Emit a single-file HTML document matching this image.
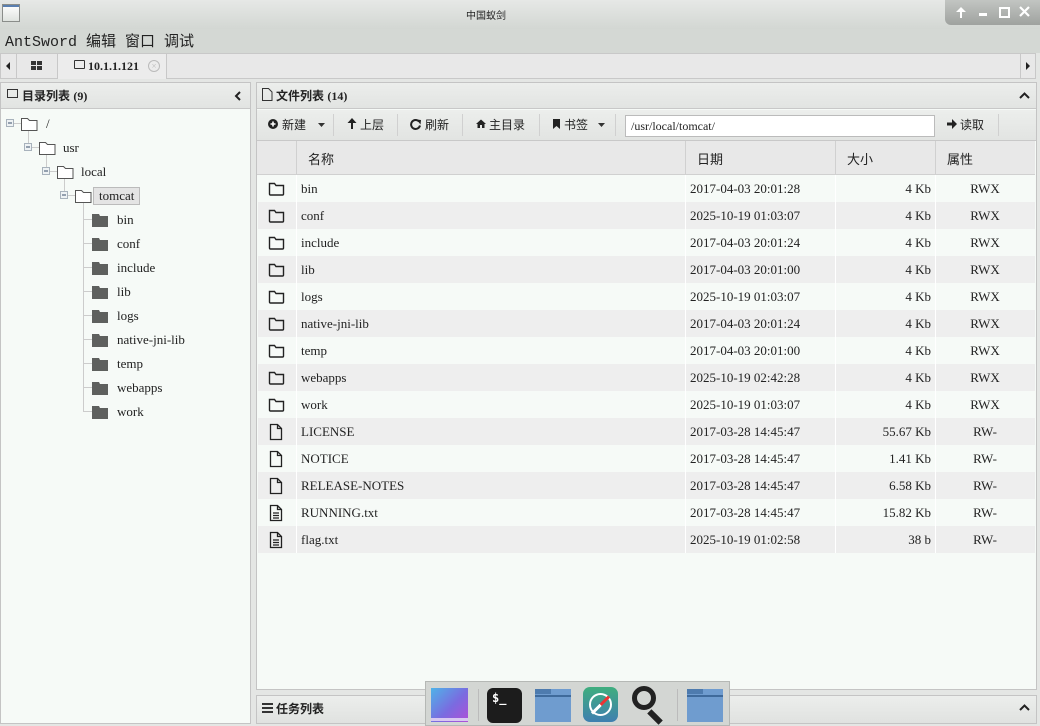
<!DOCTYPE html>
<html><head><meta charset="utf-8"><style>
*{margin:0;padding:0;box-sizing:border-box}
body{width:1040px;height:726px;overflow:hidden;background:#e4e6e4;font-family:"Liberation Serif","Noto Sans CJK SC",serif;font-size:13px;color:#222;position:relative}
.a{position:absolute}
.cjk{font-family:"Liberation Sans","Noto Sans CJK SC",sans-serif}
.row{position:absolute;left:258px;width:777px;height:27px}
.row span{position:absolute;top:6px;white-space:nowrap}
.tn{position:absolute;white-space:nowrap}
</style></head><body>
<!-- title bar -->
<div class="a" style="left:0;top:0;width:1040px;height:29px;background:linear-gradient(#e6e8e6,#d3d7d3)"></div>
<div class="a" style="left:2px;top:4px;width:18px;height:18px;border:1px solid #8a8d8a;background:linear-gradient(#fff,#dfe3df)"><div style="height:2px;background:#5a7fb0"></div></div>
<div class="a cjk" style="left:466px;top:7px;font-size:10px;color:#222">中国蚁剑</div>
<div class="a" style="left:945px;top:0;width:95px;height:25px;background:linear-gradient(#c2c5c2,#9fa29f);border-radius:0 0 0 6px"></div>
<svg class="a" style="left:945px;top:0" width="95" height="25">
<path d="M15 18v-6h-4l5-5 5 5h-4v6z" fill="#fff"/>
<rect x="34" y="13" width="8" height="3" fill="#fff"/>
<rect x="55" y="8" width="9" height="9" fill="none" stroke="#fff" stroke-width="2"/>
<path d="M75 7l9 9M84 7l-9 9" stroke="#fff" stroke-width="2.2"/>
</svg>
<!-- menu -->
<div class="a" style="left:0;top:29px;width:1040px;height:24px;background:#d4d8d4"></div>
<div class="a" style="left:5px;top:30px;font:15px 'Liberation Mono','Noto Sans CJK SC',monospace;color:#222">AntSword 编辑 窗口 调试</div>
<!-- tab bar -->
<div class="a" style="left:0;top:53px;width:1036px;height:26px;background:#e8e8e8;border:1px solid #c8c8c8"></div>
<div class="a" style="left:16px;top:54px;width:1px;height:25px;background:#c8c8c8"></div>
<svg class="a" style="left:5px;top:62px" width="6" height="9"><path d="M5 0v8l-4-4z" fill="#222"/></svg>
<div class="a" style="left:31px;top:61px;width:5px;height:4px;background:#333;box-shadow:6px 0 #333,0 5px #333,6px 5px #333"></div>
<div class="a" style="left:57px;top:54px;width:110px;height:25px;background:#ececec;border-left:1px solid #c8c8c8;border-right:1px solid #c8c8c8"></div>
<div class="a" style="left:74px;top:60px;width:11px;height:9px;border:1px solid #333;border-radius:1px"></div>
<div class="a" style="left:88px;top:59px;font-weight:bold;font-size:12px">10.1.1.121</div>
<div class="a" style="left:148px;top:60px;width:12px;height:12px;border:1px solid #bbb;border-radius:50%;color:#bbb;font-size:9px;line-height:10px;text-align:center">×</div>
<div class="a" style="left:1020px;top:54px;width:16px;height:25px;border-left:1px solid #c8c8c8"></div>
<svg class="a" style="left:1025px;top:62px" width="6" height="9"><path d="M1 0v8l4-4z" fill="#222"/></svg>
<!-- left panel -->
<div class="a" style="left:0;top:82px;width:251px;height:642px;border:1px solid #c4c4c4;background:#f6faf7"></div>
<div class="a" style="left:1px;top:83px;width:249px;height:26px;background:linear-gradient(#eceeec,#e2e4e2);border-bottom:1px solid #c8c8c8"></div>
<div class="a" style="left:7px;top:89px;width:11px;height:9px;border:1px solid #333"></div>
<div class="a cjk" style="left:22px;top:87px;font-size:12px;font-weight:bold">目录列表 <span style="font-family:'Liberation Serif'">(9)</span></div>
<svg class="a" style="left:234px;top:91px" width="8" height="10"><path d="M6 1l-4 4 4 4" fill="none" stroke="#222" stroke-width="2"/></svg>
<!-- tree -->
<svg class="a" style="left:0;top:110px" width="250" height="320">
<g stroke="#ccc" fill="none">
<line x1="28.5" y1="18" x2="28.5" y2="37"/><line x1="46.5" y1="42" x2="46.5" y2="61"/><line x1="64.5" y1="66" x2="64.5" y2="85"/>
<line x1="83.5" y1="91" x2="83.5" y2="301"/>
<line x1="83" y1="109.5" x2="92" y2="109.5"/><line x1="83" y1="133.5" x2="92" y2="133.5"/><line x1="83" y1="157.5" x2="92" y2="157.5"/><line x1="83" y1="181.5" x2="92" y2="181.5"/><line x1="83" y1="205.5" x2="92" y2="205.5"/><line x1="83" y1="229.5" x2="92" y2="229.5"/><line x1="83" y1="253.5" x2="92" y2="253.5"/><line x1="83" y1="277.5" x2="92" y2="277.5"/><line x1="83" y1="301.5" x2="92" y2="301.5"/>
<line x1="14" y1="13.5" x2="21" y2="13.5"/><line x1="32" y1="37.5" x2="39" y2="37.5"/><line x1="50" y1="61.5" x2="57" y2="61.5"/><line x1="68" y1="85.5" x2="75" y2="85.5"/>
</g>
<g fill="#eef2f4" stroke="#a8b2bc">
<rect x="6.5" y="9.5" width="7" height="7"/><rect x="24.5" y="33.5" width="7" height="7"/><rect x="42.5" y="57.5" width="7" height="7"/><rect x="60.5" y="81.5" width="7" height="7"/>
</g>
<g stroke="#3b4e6a"><line x1="8" y1="13" x2="12" y2="13"/><line x1="26" y1="37" x2="30" y2="37"/><line x1="44" y1="61" x2="48" y2="61"/><line x1="62" y1="85" x2="66" y2="85"/></g>
<g fill="#fff" stroke="#555">
<path d="M21.5 20.5v-12h6l2 2h7.5v10z"/><path d="M39.5 44.5v-12h6l2 2h7.5v10z"/><path d="M57.5 68.5v-12h6l2 2h7.5v10z"/><path d="M75.5 92.5v-12h6l2 2h7.5v10z"/>
</g>
<g fill="#5e605e">
<path d="M92 104h7l1 2h8v11h-16z"/><path d="M92 128h7l1 2h8v11h-16z"/><path d="M92 152h7l1 2h8v11h-16z"/><path d="M92 176h7l1 2h8v11h-16z"/><path d="M92 200h7l1 2h8v11h-16z"/><path d="M92 224h7l1 2h8v11h-16z"/><path d="M92 248h7l1 2h8v11h-16z"/><path d="M92 272h7l1 2h8v11h-16z"/><path d="M92 296h7l1 2h8v11h-16z"/>
</g>
<rect x="93.5" y="77.5" width="46" height="17" fill="#e4e4e4" stroke="#bbb"/>
</svg>
<div class="tn" style="left:46px;top:116px">/</div>
<div class="tn" style="left:63px;top:140px">usr</div>
<div class="tn" style="left:81px;top:164px">local</div>
<div class="tn" style="left:99px;top:188px">tomcat</div>
<div class="tn" style="left:117px;top:212px">bin</div>
<div class="tn" style="left:117px;top:236px">conf</div>
<div class="tn" style="left:117px;top:260px">include</div>
<div class="tn" style="left:117px;top:284px">lib</div>
<div class="tn" style="left:117px;top:308px">logs</div>
<div class="tn" style="left:117px;top:332px">native-jni-lib</div>
<div class="tn" style="left:117px;top:356px">temp</div>
<div class="tn" style="left:117px;top:380px">webapps</div>
<div class="tn" style="left:117px;top:404px">work</div>
<!-- right panel -->
<div class="a" style="left:256px;top:82px;width:781px;height:608px;border:1px solid #c4c4c4;background:#f6faf7"></div>
<div class="a" style="left:257px;top:83px;width:779px;height:26px;background:linear-gradient(#eceeec,#e2e4e2);border-bottom:1px solid #c8c8c8"></div>
<svg class="a" style="left:262px;top:88px" width="11" height="13"><path d="M0.5 0.5h6l3.5 3.5v8.5h-9.5z" fill="none" stroke="#333"/></svg>
<div class="a cjk" style="left:276px;top:87px;font-size:12px;font-weight:bold">文件列表 <span style="font-family:'Liberation Serif'">(14)</span></div>
<svg class="a" style="left:1019px;top:92px" width="11" height="7"><path d="M1 6l4.5-4.5 4.5 4.5" fill="none" stroke="#222" stroke-width="2"/></svg>
<!-- toolbar -->
<div class="a" style="left:257px;top:110px;width:779px;height:31px;background:linear-gradient(#eceeec,#e2e4e2);border-bottom:1px solid #c8c8c8"></div>
<svg class="a" style="left:257px;top:110px" width="370" height="31">
<circle cx="16" cy="14" r="5" fill="#222"/><path d="M13.5 14h5M16 11.5v5" stroke="#fff" stroke-width="1.6"/>
<path d="M61 13l3.5 4 3.5-4z" fill="#333"/>
<path d="M94 19v-6h-3.5l4.5-5 4.5 5h-3.5v6z" fill="#222"/>
<path d="M162 11.5a4.5 4.5 0 1 0 1 4" fill="none" stroke="#222" stroke-width="2"/><path d="M159.5 9.5l4.5 0.5-0.5 4.5z" fill="#222"/>
<path d="M219 14l5-4.5 5 4.5h-1.5v4h-2.5v-3h-2v3h-2.5v-4z" fill="#222"/>
<path d="M296 9h7v10l-3.5-3-3.5 3z" fill="#222"/>
<path d="M341 13l3.5 4 3.5-4z" fill="#333"/>
</svg>
<svg class="a" style="left:946px;top:118px" width="12" height="12"><path d="M1 4.5h5v-3.5l5 5-5 5v-3.5h-5z" fill="#222"/></svg>
<div class="a cjk" style="left:282px;top:116px;font-size:12px">新建</div>
<div class="a" style="left:333px;top:114px;width:1px;height:22px;background:#d0d0d0"></div>
<div class="a cjk" style="left:360px;top:116px;font-size:12px">上层</div>
<div class="a" style="left:397px;top:114px;width:1px;height:22px;background:#d0d0d0"></div>
<div class="a cjk" style="left:425px;top:116px;font-size:12px">刷新</div>
<div class="a" style="left:462px;top:114px;width:1px;height:22px;background:#d0d0d0"></div>
<div class="a cjk" style="left:489px;top:116px;font-size:12px">主目录</div>
<div class="a" style="left:539px;top:114px;width:1px;height:22px;background:#d0d0d0"></div>
<div class="a cjk" style="left:564px;top:116px;font-size:12px">书签</div>
<div class="a" style="left:615px;top:114px;width:1px;height:22px;background:#d0d0d0"></div>
<div class="a" style="left:625px;top:115px;width:310px;height:22px;background:#fff;border:1px solid #bbb;padding:3px 5px;font-size:12px">/usr/local/tomcat/</div>
<div class="a cjk" style="left:960px;top:116px;font-size:12px">读取</div>
<div class="a" style="left:998px;top:114px;width:1px;height:22px;background:#d0d0d0"></div>
<!-- header -->
<div class="a" style="left:257px;top:141px;width:778px;height:34px;background:#e8e8e8;border-bottom:1px solid #d0d0d0"></div>
<div class="a" style="left:296px;top:141px;width:1px;height:34px;background:#d0d0d0"></div>
<div class="a" style="left:685px;top:141px;width:1px;height:34px;background:#d0d0d0"></div>
<div class="a" style="left:835px;top:141px;width:1px;height:34px;background:#d0d0d0"></div>
<div class="a" style="left:935px;top:141px;width:1px;height:34px;background:#d0d0d0"></div>
<div class="a cjk" style="left:308px;top:149px;font-size:13px">名称</div>
<div class="a cjk" style="left:697px;top:149px;font-size:13px">日期</div>
<div class="a cjk" style="left:847px;top:149px;font-size:13px">大小</div>
<div class="a cjk" style="left:947px;top:149px;font-size:13px">属性</div>
<!-- rows -->
<div id="rows"></div>
<script>
var d=[["bin","2017-04-03 20:01:28","4 Kb","RWX",0],["conf","2025-10-19 01:03:07","4 Kb","RWX",0],["include","2017-04-03 20:01:24","4 Kb","RWX",0],["lib","2017-04-03 20:01:00","4 Kb","RWX",0],["logs","2025-10-19 01:03:07","4 Kb","RWX",0],["native-jni-lib","2017-04-03 20:01:24","4 Kb","RWX",0],["temp","2017-04-03 20:01:00","4 Kb","RWX",0],["webapps","2025-10-19 02:42:28","4 Kb","RWX",0],["work","2025-10-19 01:03:07","4 Kb","RWX",0],["LICENSE","2017-03-28 14:45:47","55.67 Kb","RW-",1],["NOTICE","2017-03-28 14:45:47","1.41 Kb","RW-",1],["RELEASE-NOTES","2017-03-28 14:45:47","6.58 Kb","RW-",1],["RUNNING.txt","2017-03-28 14:45:47","15.82 Kb","RW-",2],["flag.txt","2025-10-19 01:02:58","38 b","RW-",2]];
var h="";
var ic=['<path d="M1.5 2.5h5l1.5 2h7.5v8.5q0 1-1 1h-12q-1 0-1-1z" fill="none" stroke="#222" stroke-width="1.4"/>','<path d="M2.5 1.5h7l4 4v11h-11z M9.5 1.5v4h4" fill="none" stroke="#222" stroke-width="1.3"/>','<path d="M2.5 1.5h7l4 4v11h-11z M9.5 1.5v4h4 M5 9h6 M5 11.5h6 M5 14h6" fill="none" stroke="#222" stroke-width="1.3"/>'];
d.forEach(function(r,i){var y=175+i*27;var bg=i%2?"#eeeeee":"#f6faf7";
h+='<div class="row" style="top:'+y+'px;background:'+bg+'">'+
'<svg style="position:absolute;left:10px;top:'+(r[4]?5:6)+'px" width="18" height="18">'+ic[r[4]]+'</svg>'+
'<div style="position:absolute;left:38px;top:0;width:1px;height:27px;background:#fff"></div><div style="position:absolute;left:427px;top:0;width:1px;height:27px;background:#fff"></div><div style="position:absolute;left:577px;top:0;width:1px;height:27px;background:#fff"></div><div style="position:absolute;left:677px;top:0;width:1px;height:27px;background:#fff"></div>'+
'<span style="left:43px">'+r[0]+'</span><span style="left:432px">'+r[1]+'</span><span style="right:104px">'+r[2]+'</span><span style="left:677px;width:100px;text-align:center">'+r[3]+'</span></div>';});
document.getElementById("rows").innerHTML=h;
</script>
<!-- task panel -->
<div class="a" style="left:256px;top:695px;width:781px;height:29px;border:1px solid #c4c4c4;background:linear-gradient(#eceeec,#e0e2e0)"></div>
<div class="a" style="left:262px;top:703px;width:11px;height:2px;background:#333;box-shadow:0 4px #333,0 8px #333"></div>
<div class="a cjk" style="left:276px;top:700px;font-size:12px;font-weight:bold">任务列表</div>
<svg class="a" style="left:1019px;top:704px" width="11" height="7"><path d="M1 6l4.5-4.5 4.5 4.5" fill="none" stroke="#222" stroke-width="2"/></svg>
<!-- dock -->
<div class="a" style="left:425px;top:681px;width:305px;height:45px;background:#d3d6d3;border:1px solid #b5b8b5"></div>
<div class="a" style="left:431px;top:688px;width:37px;height:34px;background:linear-gradient(135deg,#4fb3e8,#7a6be0 55%,#b04fd8)"></div>
<div class="a" style="left:431px;top:718px;width:37px;height:3px;background:#d8c8f0"></div>
<div class="a" style="left:478px;top:689px;width:1px;height:32px;background:#bbb"></div>
<div class="a" style="left:487px;top:688px;width:35px;height:35px;background:#1c1c1c;border-radius:6px;color:#fff;font:bold 12px 'DejaVu Sans Mono';padding:3px 5px">$_</div>
<div class="a" style="left:535px;top:689px;width:36px;height:33px;background:#6f9ccf"><div style="width:16px;height:5px;background:#4e7bae"></div><div style="height:2px;background:#3f6a9b;margin-top:1px"></div></div>
<div class="a" style="left:583px;top:687px;width:35px;height:35px;border-radius:7px;background:linear-gradient(#3fae7e,#3f7fb0)"><div style="position:absolute;left:6px;top:6px;width:23px;height:23px;border:2px solid #fff;border-radius:50%"></div><div style="position:absolute;left:16px;top:6px;width:3px;height:24px;background:linear-gradient(#e33 50%,#fff 50%);transform:rotate(45deg)"></div></div>
<div class="a" style="left:632px;top:686px;width:24px;height:24px;border:5px solid #222;border-radius:50%"></div>
<div class="a" style="left:652px;top:709px;width:6px;height:16px;background:#222;transform:rotate(-45deg)"></div>
<div class="a" style="left:677px;top:689px;width:1px;height:32px;background:#bbb"></div>
<div class="a" style="left:687px;top:689px;width:36px;height:33px;background:#6f9ccf"><div style="width:16px;height:5px;background:#4e7bae"></div><div style="height:2px;background:#3f6a9b;margin-top:1px"></div></div>
</body></html>
